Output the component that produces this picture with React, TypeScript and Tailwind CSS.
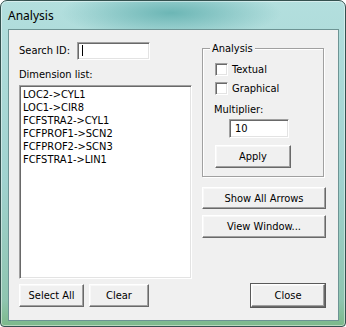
import React from 'react';

const font = "font-['DejaVu_Sans_Condensed','Liberation_Sans',sans-serif] text-[11px] leading-[13px] text-black";

const raised =
  'border border-t-white border-l-white border-b-[#696969] border-r-[#696969] bg-[#f0f0f0] shadow-[inset_-1px_-1px_0_#a0a0a0,inset_1px_1px_0_#f8f8f8] flex items-center justify-center';

const sunken =
  'border border-t-[#a0a0a0] border-l-[#a0a0a0] border-b-white border-r-white bg-white shadow-[inset_1px_1px_0_#696969,inset_-1px_-1px_0_#e3e3e3]';

const Button = ({ label, className = '' }: { label: string; className?: string }) => (
  <div className={`${raised} ${className}`}>{label}</div>
);

const CheckRow = ({ label }: { label: string }) => (
  <div className="flex items-center h-[13px]">
    <div className={`${sunken} w-[13px] h-[13px]`} />
    <span className="ml-[4px]">{label}</span>
  </div>
);

const items = ['LOC2->CYL1', 'LOC1->CIR8', 'FCFSTRA2->CYL1', 'FCFPROF1->SCN2', 'FCFPROF2->SCN3', 'FCFSTRA1->LIN1'];

export default function App() {
  return (
    <div className="w-[346px] h-[327px] overflow-hidden">
      <div className="w-[346px] h-[327px] flex flex-col pl-[7px] border border-[#34514f] rounded-t-[7px] rounded-b-[4px] shadow-[inset_0_0_0_1px_rgba(255,255,255,0.45)] bg-[radial-gradient(ellipse_110px_26px_at_170px_12px,#6cb6b5,transparent),linear-gradient(180deg,#b3dfde,#a0d2cf_55%,#8fc5b0_92%,#7cb98a)]">
        {/* Title bar */}
        <div className="h-[28px] flex items-center font-['Noto_Sans','Open_Sans',sans-serif] text-[12px] text-black pt-[1px]">
          Analysis
        </div>

        {/* Client area */}
        <div className={`w-[331px] h-[292px] border border-[#6d9494] bg-[#f0f0f0] flex flex-col pl-[10px] pt-[12px] ${font}`}>
          <div className="flex">
            {/* Left column */}
            <div className="w-[173px] flex flex-col">
              <div className="flex items-center h-[17px]">
                <span className="w-[58px]">Search ID:</span>
                <div className={`${sunken} w-[73px] h-[18px] flex items-center pl-[4px]`}>
                  <div className="w-px h-[11px] bg-black" />
                </div>
              </div>
              <div className="mt-[9px]">Dimension list:</div>
              <div className={`${sunken} mt-[4px] h-[194px] pt-[2px] pl-[3px]`}>
                {items.map((it) => (
                  <div key={it} className="h-[13px]">
                    {it}
                  </div>
                ))}
              </div>
            </div>

            {/* Right column */}
            <div className="ml-[10px] w-[124px] flex flex-col">
              <div className="relative mt-[6px] w-[122px] h-[129px] border border-[#a0a0a0] shadow-[1px_1px_0_white,inset_1px_1px_0_white] pl-[12px] pt-[14px] flex flex-col">
                <span className="absolute -top-[7px] left-[7px] px-[2px] bg-[#f0f0f0]">Analysis</span>
                <CheckRow label="Textual" />
                <div className="mt-[6px]">
                  <CheckRow label="Graphical" />
                </div>
                <div className="mt-[8px] -ml-[1px]">Multiplier:</div>
                <div className={`${sunken} mt-[3px] ml-[14px] w-[60px] h-[19px] flex items-center pl-[5px]`}>10</div>
                <Button label="Apply" className="mt-[7px] w-[76px] h-[23px]" />
              </div>
              <Button label="Show All Arrows" className="mt-[10px] w-[124px] h-[22px]" />
              <Button label="View Window..." className="mt-[6px] w-[124px] h-[23px]" />
            </div>
          </div>

          {/* Bottom buttons */}
          <div className="flex mt-[5px] pr-[13px]">
            <Button label="Select All" className="w-[65px] h-[23px]" />
            <Button label="Clear" className="ml-[5px] w-[60px] h-[23px]" />
            <div className="flex-1" />
            <Button label="Close" className="w-[74px] h-[23px] outline outline-1 outline-[#5a5a5a] -outline-offset-0" />
          </div>
        </div>
      </div>
    </div>
  );
}
